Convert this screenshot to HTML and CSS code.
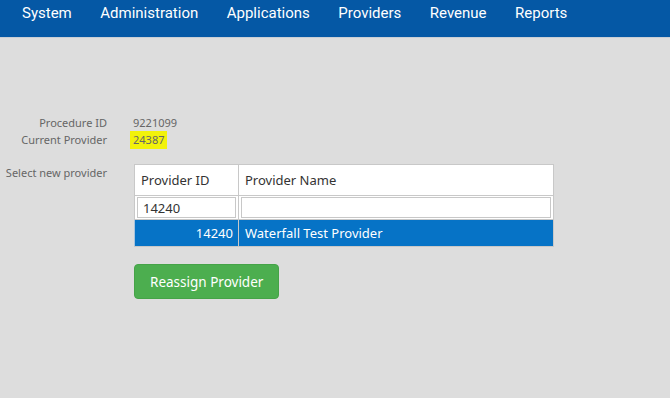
FILE: index.html
```html
<!DOCTYPE html>
<html lang="en">
<head>
  <meta charset="UTF-8">
  <title>Reassign Provider</title>
  <link rel="stylesheet" href="styles.css">
</head>
<body>
  <nav class="topnav">
    <a href="#">System</a>
    <a href="#">Administration</a>
    <a href="#">Applications</a>
    <a href="#">Providers</a>
    <a href="#">Revenue</a>
    <a href="#">Reports</a>
  </nav>

  <main class="content">
    <div class="info">
      <div class="row">
        <span class="label">Procedure ID</span>
        <span class="value">9221099</span>
      </div>
      <div class="row">
        <span class="label">Current Provider</span>
        <span class="value"><mark class="hl">24387</mark></span>
      </div>
    </div>

    <div class="row select-row">
      <span class="label">Select new provider</span>
      <div class="picker">
        <table class="grid">
          <thead>
            <tr>
              <th class="col-id">Provider ID</th>
              <th>Provider Name</th>
            </tr>
            <tr class="filters">
              <td><input type="text" value="14240"></td>
              <td><input type="text" value=""></td>
            </tr>
          </thead>
          <tbody>
            <tr class="selected">
              <td class="num">14240</td>
              <td>Waterfall Test Provider</td>
            </tr>
          </tbody>
        </table>
        <button class="btn-success">Reassign Provider</button>
      </div>
    </div>
  </main>
</body>
</html>
```

FILE: styles.css
```css
body {
  margin: 0;
  padding: 0;
  background-color: #dddddd;
  font-family: "Noto Sans", "Open Sans", sans-serif;
  font-size: 11px;
  color: #666666;
}
.topnav {
  height: 37px;
  background-color: #0558a5;
  border-bottom: 1px solid #c9ced6;
  display: flex;
  align-items: flex-start;
  padding-left: 22px;
  gap: 28.5px;
}
.topnav a {
  font-family: Roboto, sans-serif;
  font-size: 15px;
  font-weight: 400;
  color: #ffffff;
  text-decoration: none;
  line-height: 26px;
}
.content {
  padding-top: 76px;
}
.row {
  display: flex;
  align-items: flex-start;
  line-height: 17px;
}
.label {
  width: 107px;
  text-align: right;
  flex-shrink: 0;
  white-space: nowrap;
}
.value {
  margin-left: 26px;
  color: #666666;
}
.hl {
  background-color: #f2f20a;
  color: #666666;
  padding: 1px 3px 2px;
  margin-left: -3px;
}
.select-row {
  margin-top: 16px;
}
.picker {
  margin-left: 27px;
}
.grid {
  border-collapse: collapse;
  width: 420px;
  background-color: #ffffff;
  font-size: 13px;
  color: #333333;
}
.grid th,
.grid td {
  border: 1px solid #c8c8c8;
  text-align: left;
  font-weight: normal;
  padding: 0 6px;
}
.grid th {
  height: 29px;
  padding-top: 1px;
}
.col-id {
  width: 91px;
}
.filters td {
  padding: 1px 2px;
  height: 20px;
}
.filters input {
  box-sizing: border-box;
  width: 100%;
  height: 21px;
  border: 1px solid #c8c8c8;
  font-family: inherit;
  font-size: 13px;
  color: #333333;
  padding: 0 5px;
  display: block;
}
.selected td {
  background-color: #0673c6;
  color: #ffffff;
  height: 26px;
  border-color: #c8c8c8;
  border-left-color: #a6c4de;
}
.selected td.num {
  text-align: right;
  padding-right: 5px;
}
.btn-success {
  margin-top: 17px;
  background-color: #4cae4f;
  border: 1px solid #45a348;
  border-radius: 4px;
  color: #ffffff;
  font-family: inherit;
  font-size: 13.5px;
  height: 35px;
  padding: 0 15px;
}
```
